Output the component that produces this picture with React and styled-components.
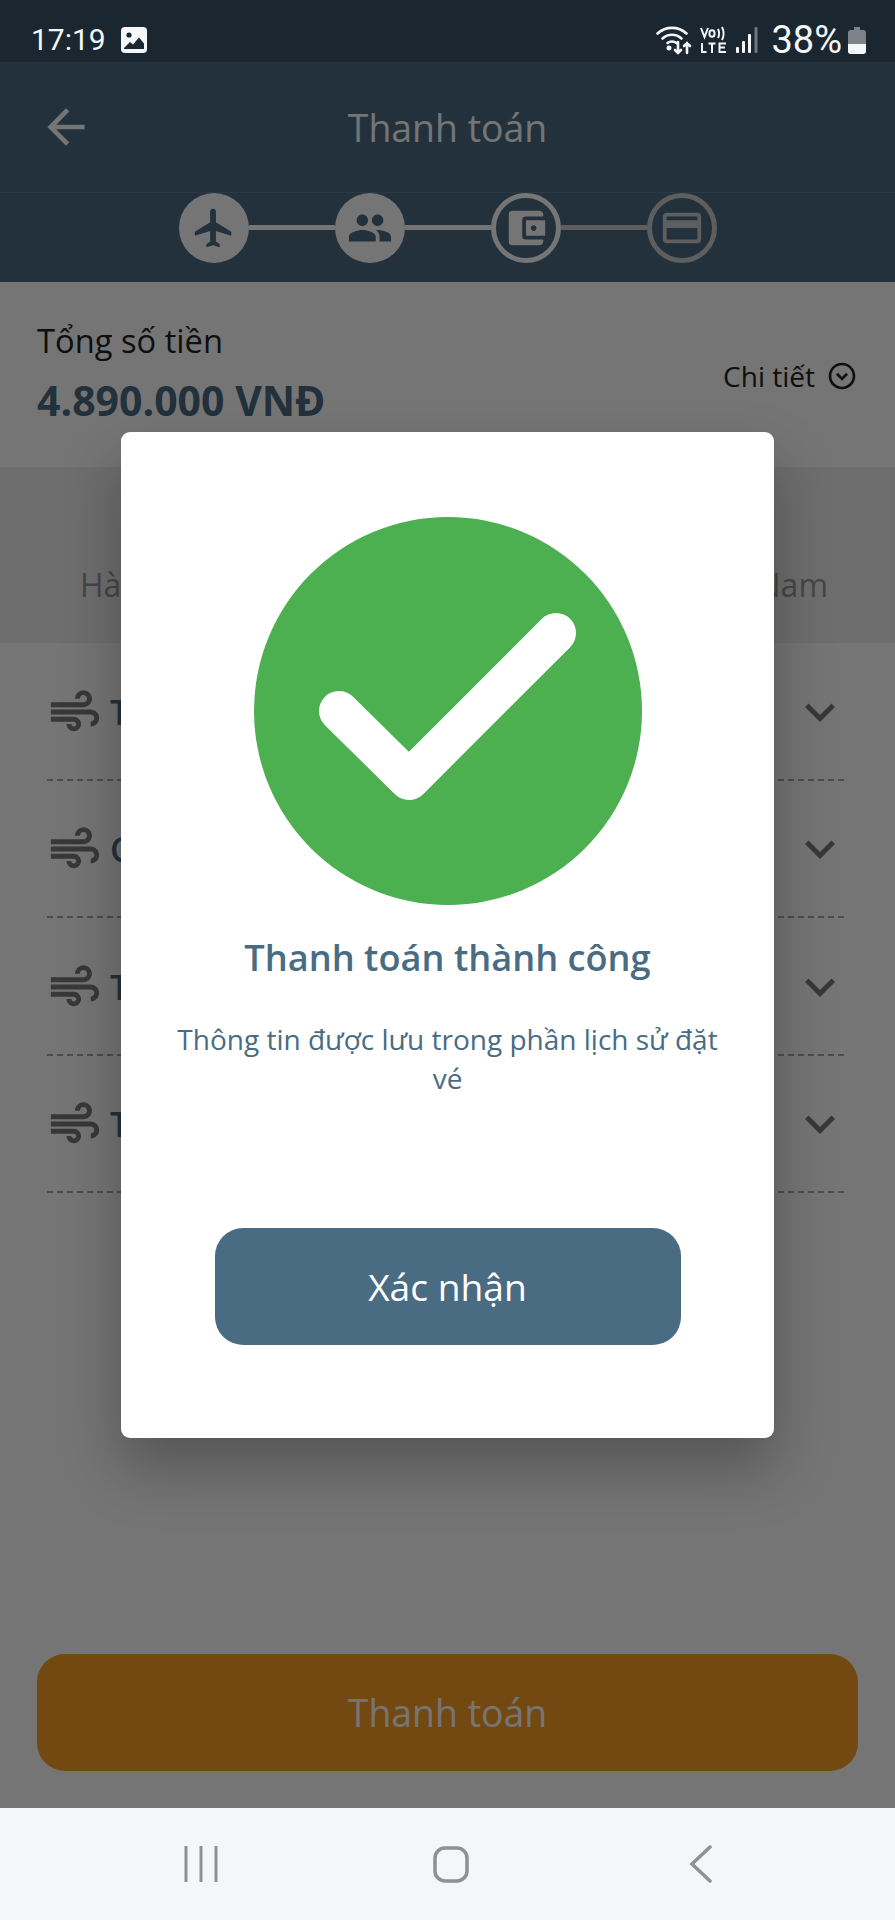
import React from "react";
import styled, { createGlobalStyle } from "styled-components";
import {
  MdAir,
  MdAccountBalanceWallet,
  MdArrowBack,
  MdCreditCard,
  MdFlight,
  MdKeyboardArrowDown,
  MdOutlineExpandCircleDown,
  MdPeople,
} from "react-icons/md";

const brand = "#4a6c83";

const GlobalStyle = createGlobalStyle`
  html, body {
    margin: 0;
    padding: 0;
    background: #fff;
  }
  * {
    box-sizing: border-box;
  }
`;

const Phone = styled.div`
  width: 895px;
  height: 1920px;
  display: flex;
  flex-direction: column;
  overflow: hidden;
  font-family: "Open Sans", "Noto Sans", sans-serif;
`;

const StatusBar = styled.div`
  height: 62px;
  flex: none;
  padding: 18px 29px 0 31px;
  background: #1a2630;
  color: #f4f6f7;
  display: flex;
  align-items: center;
  justify-content: space-between;
  font-family: Roboto, "Noto Sans", sans-serif;
`;

const StatusGroup = styled.div`
  display: flex;
  align-items: center;
`;

const StatusIcon = styled.span`
  display: flex;
  margin-right: ${(p) => p.$gap || 0}px;
`;

const Clock = styled.span`
  font-size: 30px;
  line-height: 36px;
  margin-right: 15px;
`;

const Percent = styled.span`
  font-size: 38px;
  line-height: 36px;
  margin: 0 6px 0 13px;
`;

const Screen = styled.div`
  position: relative;
  flex: 1;
  display: flex;
  flex-direction: column;
  background: #fff;
`;

const Header = styled.header`
  height: 131px;
  flex: none;
  padding: 0 37px;
  background: ${brand};
  border-bottom: 1px solid #5c7d92;
  color: #fff;
  display: grid;
  grid-template-columns: 60px 1fr 60px;
  align-items: center;
`;

const BackIcon = styled(MdArrowBack)`
  font-size: 56px;
  margin-left: 1px;
`;

const HeaderTitle = styled.div`
  text-align: center;
  font-size: 37.4px;
`;

const Stepper = styled.div`
  height: 89px;
  flex: none;
  background: ${brand};
  display: flex;
  justify-content: center;
  align-items: flex-start;
`;

const Step = styled.div`
  width: 70px;
  height: 70px;
  border-radius: 50%;
  flex: none;
  display: flex;
  align-items: center;
  justify-content: center;
  font-size: 46px;
  background: ${(p) => (p.$done ? "#fff" : "transparent")};
  color: ${(p) => (p.$done ? brand : p.$muted ? "#ccc" : "#fff")};
  border: ${(p) => (p.$done ? "0" : `5px solid ${p.$muted ? "#ccc" : "#fff"}`)};
`;

const Connector = styled.div`
  width: 86px;
  height: 5px;
  margin-top: 32px;
  flex: none;
  background: ${(p) => (p.$muted ? "#ccc" : "#fff")};
`;

const Summary = styled.section`
  height: 185px;
  flex: none;
  padding: 37px 37px 0;
  display: flex;
  justify-content: space-between;
  align-items: flex-start;
`;

const SummaryLabel = styled.div`
  font-size: 32.7px;
  line-height: 44px;
  color: #222;
`;

const SummaryAmount = styled.div`
  font-size: 41px;
  line-height: 56px;
  margin-top: 9px;
  font-weight: 700;
  color: ${brand};
`;

const DetailLink = styled.div`
  display: flex;
  align-items: center;
  gap: 11px;
  margin: 37px 0 0 0;
  font-size: 28px;
  line-height: 40px;
  color: #222;
`;

const DetailIcon = styled(MdOutlineExpandCircleDown)`
  font-size: 32px;
`;

const Tabs = styled.div`
  height: 176px;
  flex: none;
  padding: 58px 67px 0 80px;
  background: #f0f0f0;
  display: flex;
  justify-content: space-between;
  align-items: center;
  font-size: 32px;
  color: #9a9a9a;
`;

const Rows = styled.div`
  flex: 1;
  padding: 0 51px 0 47px;
`;

const Row = styled.div`
  height: 137.5px;
  padding-top: 2px;
  display: flex;
  align-items: center;
  border-bottom: 2px dashed #a6a6a6;
`;

const WindIcon = styled(MdAir)`
  font-size: 58px;
  margin-left: -1px;
  color: #7a7a7a;
`;

const RowTitle = styled.span`
  flex: 1;
  margin-left: 6px;
  font-size: 34px;
  font-weight: 600;
  color: ${brand};
`;

const RowChevron = styled(MdKeyboardArrowDown)`
  font-size: 60px;
  margin-right: -6px;
  color: #7a7a7a;
`;

const PayWrap = styled.div`
  flex: none;
  padding: 0 37px 37px;
`;

const PayButton = styled.div`
  height: 117px;
  border-radius: 28px;
  background: #fc9d26;
  color: #fff;
  font-size: 37.4px;
  display: flex;
  align-items: center;
  justify-content: center;
`;

const Overlay = styled.div`
  position: absolute;
  inset: 0;
  background: rgba(0, 0, 0, 0.54);
  display: flex;
  align-items: center;
  justify-content: center;
`;

const Modal = styled.div`
  width: 653px;
  height: 1006px;
  padding: 85px 40px 93px;
  border-radius: 9px;
  background: #fff;
  box-shadow: 0 30px 60px rgba(0, 0, 0, 0.28);
  display: flex;
  flex-direction: column;
  align-items: center;
`;

const SuccessBadge = styled.svg`
  width: 388px;
  height: 388px;
  flex: none;
`;

const ModalTitle = styled.h2`
  margin: 27px 0 0;
  font-size: 36.2px;
  line-height: 50px;
  font-weight: 600;
  color: ${brand};
  text-align: center;
`;

const ModalText = styled.p`
  margin: 38px 0 0;
  font-size: 28px;
  line-height: 39px;
  color: ${brand};
  text-align: center;
`;

const ConfirmButton = styled.div`
  width: 466px;
  height: 117px;
  margin-top: auto;
  border-radius: 28px;
  background: ${brand};
  color: #fff;
  font-size: 37.2px;
  display: flex;
  align-items: center;
  justify-content: center;
`;

const NavBar = styled.nav`
  height: 112px;
  flex: none;
  padding: 0 0 0 7px;
  background: #f5f6f8;
  display: flex;
  justify-content: center;
  align-items: center;
  gap: 170px;
`;

const NavSlot = styled.div`
  width: 80px;
  display: flex;
  justify-content: center;
  color: #8e9093;
`;

const ImageGlyph = () => (
  <svg width="26" height="26" viewBox="0 0 26 26">
    <rect width="26" height="26" rx="4" fill="#f4f6f7" />
    <circle cx="8" cy="8" r="2.6" fill="#1a2630" />
    <path d="M3 21l6-6 3 2.5 6-7 5 6V22H3z" fill="#1a2630" />
  </svg>
);

const WifiGlyph = () => (
  <svg width="37" height="30" viewBox="0 0 37 30" fill="none" stroke="#f4f6f7" strokeWidth="2.6" strokeLinecap="round">
    <path d="M1.5 8.5C10 1 22 1 30.5 8.5" />
    <path d="M6.5 13.5C12 8.5 20 8.5 25.5 13.5" />
    <path d="M11.5 18C14 16 18 16 20.5 18" />
    <circle cx="13" cy="23" r="1.2" fill="#f4f6f7" />
    <path d="M22 17v11M19 25l3 3 3-3" />
    <path d="M31 28V18M28 21l3-3 3 3" />
  </svg>
);

const VolteGlyph = () => (
  <svg width="27" height="28" viewBox="0 0 27 28" fill="none" stroke="#f4f6f7" strokeWidth="2">
    <path d="M1 2l3.5 9L8 2" />
    <ellipse cx="12" cy="7.5" rx="2.6" ry="3.3" />
    <path d="M18 3c1.5 3 1.5 6 0 9M22 1c2 4 2 9 0 13" />
    <path d="M2 17v9h4.5M8.5 17.5h7M12 17.5V27M26 17.5h-6.5V26H26M19.5 21.5H25" />
  </svg>
);

const SignalGlyph = () => (
  <svg width="22" height="26" viewBox="0 0 22 26">
    <rect x="0" y="20" width="3" height="6" rx="1" fill="#f4f6f7" />
    <rect x="6" y="14" width="3" height="12" rx="1" fill="#f4f6f7" />
    <rect x="12" y="7" width="3" height="19" rx="1" fill="#f4f6f7" />
    <rect x="18.5" y="0" width="3" height="26" rx="1" fill="#6d767d" />
  </svg>
);

const BatteryGlyph = () => (
  <svg width="18" height="27" viewBox="0 0 18 27">
    <path d="M6 0h6v3h3a3 3 0 0 1 3 3v18a3 3 0 0 1-3 3H3a3 3 0 0 1-3-3V6a3 3 0 0 1 3-3h3z" fill="#7b8389" />
    <path d="M0 17h18v7a3 3 0 0 1-3 3H3a3 3 0 0 1-3-3z" fill="#f4f6f7" />
  </svg>
);

const rows = ["Thông tin chuyến", "Chi tiết giá", "Thuế và phí", "Tổng cộng"];

const App = () => {
  return (
    <Phone>
      <GlobalStyle />
      <StatusBar>
        <StatusGroup>
          <Clock>17:19</Clock>
          <ImageGlyph />
        </StatusGroup>
        <StatusGroup>
          <StatusIcon $gap={7}>
            <WifiGlyph />
          </StatusIcon>
          <StatusIcon $gap={9}>
            <VolteGlyph />
          </StatusIcon>
          <SignalGlyph />
          <Percent>38%</Percent>
          <BatteryGlyph />
        </StatusGroup>
      </StatusBar>

      <Screen>
        <Header>
          <BackIcon />
          <HeaderTitle>Thanh toán</HeaderTitle>
          <span />
        </Header>
        <Stepper>
          <Step $done>
            <MdFlight />
          </Step>
          <Connector />
          <Step $done>
            <MdPeople />
          </Step>
          <Connector />
          <Step>
            <MdAccountBalanceWallet />
          </Step>
          <Connector $muted />
          <Step $muted>
            <MdCreditCard />
          </Step>
        </Stepper>

        <Summary>
          <div>
            <SummaryLabel>Tổng số tiền</SummaryLabel>
            <SummaryAmount>4.890.000 VNĐ</SummaryAmount>
          </div>
          <DetailLink>
            Chi tiết
            <DetailIcon />
          </DetailLink>
        </Summary>

        <Tabs>
          <span>Hà Nội</span>
          <span>Hà Nam</span>
        </Tabs>

        <Rows>
          {rows.map((title) => (
            <Row key={title}>
              <WindIcon />
              <RowTitle>{title}</RowTitle>
              <RowChevron />
            </Row>
          ))}
        </Rows>

        <PayWrap>
          <PayButton>Thanh toán</PayButton>
        </PayWrap>

        <Overlay>
          <Modal>
            <SuccessBadge viewBox="0 0 388 388">
              <circle cx="194" cy="194" r="194" fill="#4caf50" />
              <path
                d="M85 194l70 69L302 116"
                fill="none"
                stroke="#fff"
                strokeWidth="40"
                strokeLinecap="round"
                strokeLinejoin="round"
              />
            </SuccessBadge>
            <ModalTitle>Thanh toán thành công</ModalTitle>
            <ModalText>Thông tin được lưu trong phần lịch sử đặt vé</ModalText>
            <ConfirmButton>Xác nhận</ConfirmButton>
          </Modal>
        </Overlay>
      </Screen>

      <NavBar>
        <NavSlot>
          <svg width="34" height="36" viewBox="0 0 34 36" fill="none" stroke="currentColor" strokeWidth="3">
            <path d="M2 0v36M17 0v36M32 0v36" />
          </svg>
        </NavSlot>
        <NavSlot>
          <svg width="36" height="37" viewBox="0 0 36 37">
            <rect x="2" y="2" width="32" height="33" rx="10" fill="none" stroke="currentColor" strokeWidth="3.5" />
          </svg>
        </NavSlot>
        <NavSlot>
          <svg width="24" height="38" viewBox="0 0 24 38" fill="none" stroke="currentColor" strokeWidth="3.5" strokeLinecap="round">
            <path d="M21 2L3 19l18 17" />
          </svg>
        </NavSlot>
      </NavBar>
    </Phone>
  );
};

export default App;
